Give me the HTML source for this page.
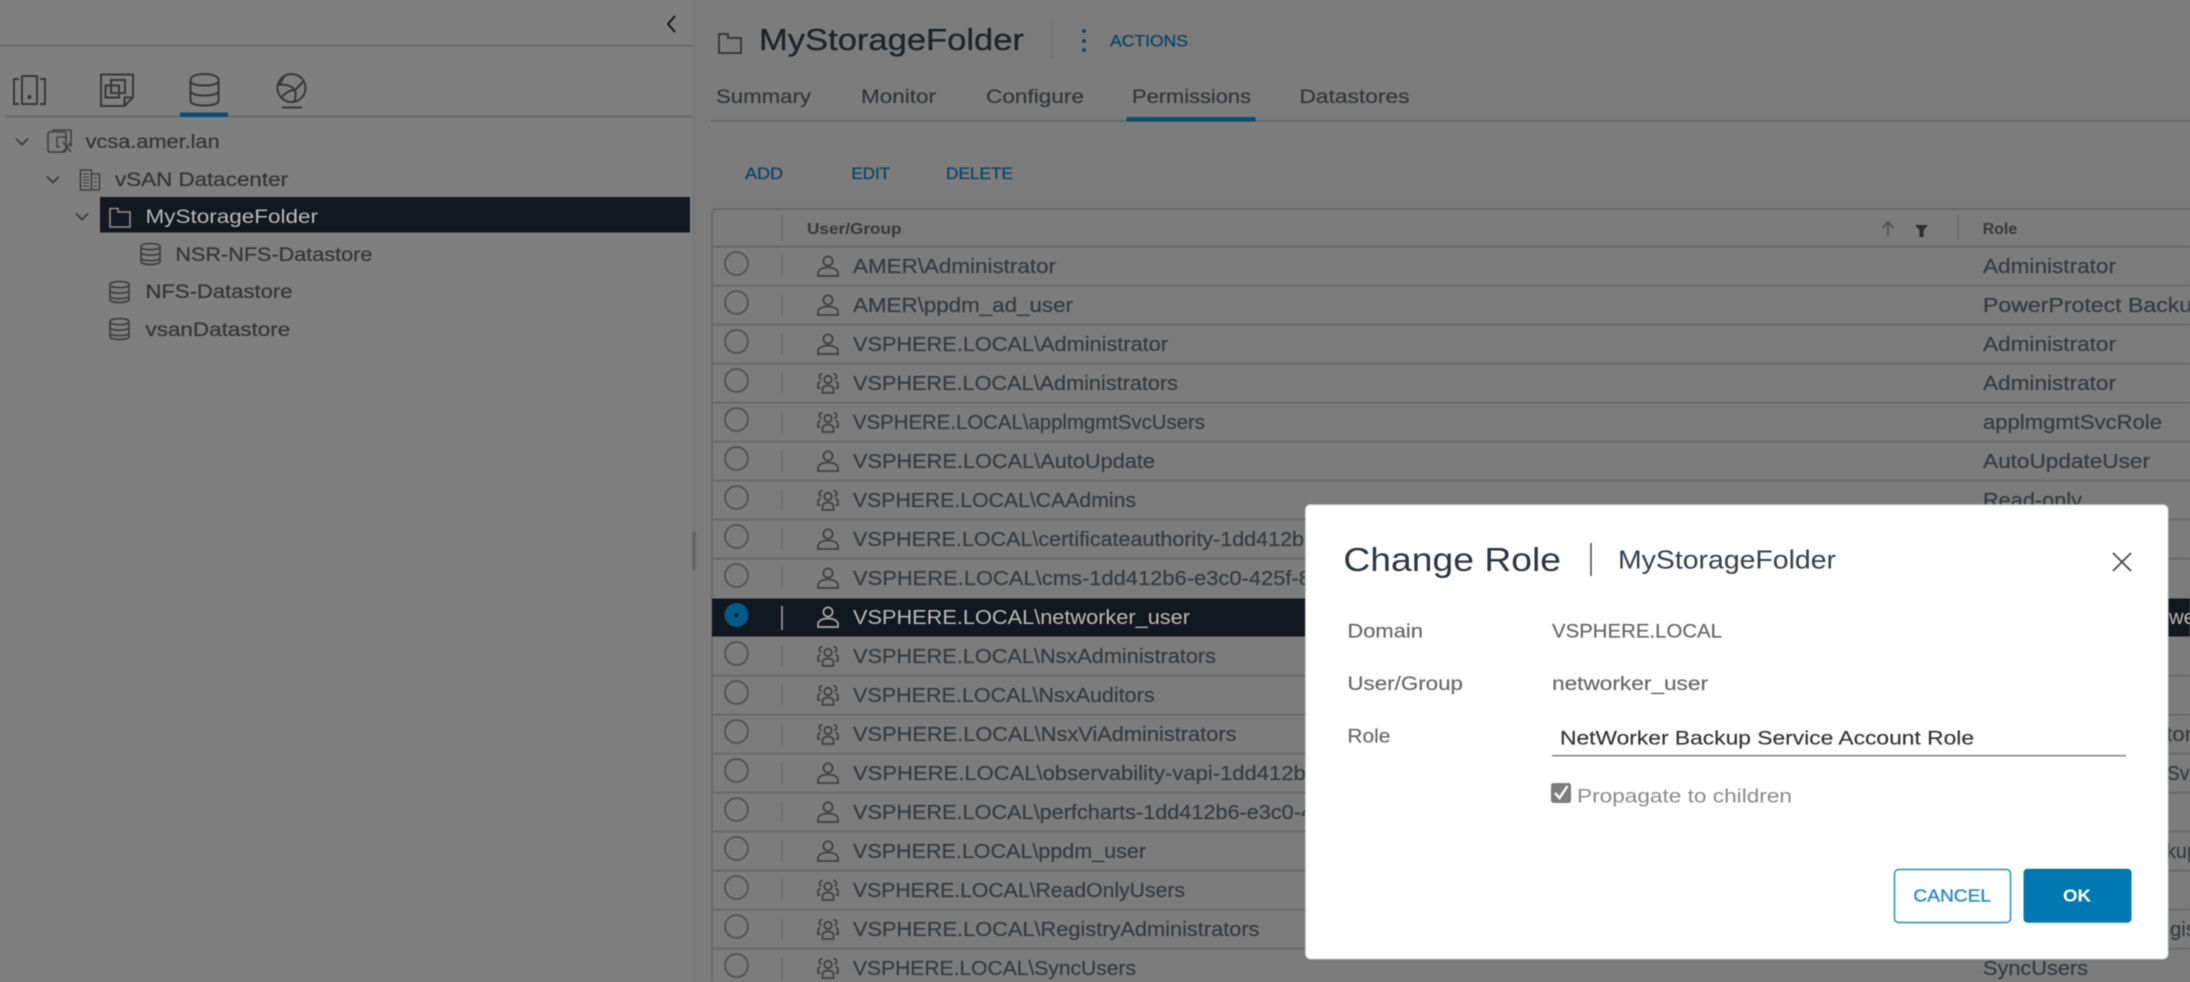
<!DOCTYPE html>
<html lang="en"><head><meta charset="utf-8"><title>Change Role</title>
<style>
html,body{margin:0;padding:0;background:#7d7d7d;width:2190px;height:982px;overflow:hidden}
svg{display:block;filter:blur(.55px)}
text{font-family:"Liberation Sans",sans-serif;white-space:pre}
.t{font-size:19px;fill:#363636;stroke:#363636;stroke-width:.25}
.r{font-size:20px;fill:#383c40;stroke:#383c40;stroke-width:.25}
.b{font-size:16.5px;fill:#0f4766;stroke:#0f4766;stroke-width:.35}
.tab{font-size:19.5px;fill:#35383b;stroke:#35383b;stroke-width:.25}
.l{font-size:19.5px;fill:#666;stroke:#666;stroke-width:.15}
.ic{fill:none;stroke:#414141;stroke-width:1.8}
.ln{stroke:#676767;stroke-width:1.7}
.sp{stroke:#6c6c6c;stroke-width:1.4}
.ra{fill:none;stroke:#525252;stroke-width:1.8}
</style></head><body>
<svg xmlns="http://www.w3.org/2000/svg" width="2190" height="982" viewBox="0 0 2190 982">
<defs>
<symbol id="p" width="22" height="22" viewBox="0 0 22 22"><g class="ic"><circle cx="11" cy="6" r="4.6"/><path d="M1 21v-3c0-3 4-5.500 10-5.500s10 2.500 10 5.500v3z"/></g></symbol>
<symbol id="g" width="22" height="22" viewBox="0 0 22 22"><g class="ic"><circle cx="11" cy="7.500" r="3.700"/><path d="M5.500 21v-4c0-2 2.500-3.500 5.500-3.500s5.500 1.500 5.500 3.500v4z"/><path d="M5.500 1.800a2.800 2.800 0 0 0 -1 5.500M16.500 1.800a2.800 2.800 0 0 1 1 5.500M3.500 9.500c-2 .5-2.500 2-2.500 3.500v3h2.500M18.500 9.500c2 .5 2.500 2 2.500 3.500v3h-2.500"/></g></symbol>
<symbol id="d" width="21" height="24" viewBox="0 0 21 24"><g class="ic"><path d="M1 4.500C1 .5 20 .5 20 4.500v15c0 4-19 4-19 0z"/><path d="M1 5c0 3.500 19 3.500 19 0M1 10.500c0 3.500 19 3.500 19 0M1 16c0 3.500 19 3.500 19 0"/></g></symbol>
<symbol id="c" width="14" height="9" viewBox="0 0 14 9"><path fill="none" stroke="#3e3e3e" stroke-width="1.900" d="M1 1.500l6 6 6-6"/></symbol>
</defs>

<!-- backgrounds -->
<rect width="2190" height="982" fill="#7c7c7c"/>
<rect x="0" y="0" width="692" height="982" fill="#7f7f7f"/>
<rect x="692" y="0" width="4" height="982" fill="#797979"/>
<rect x="692" y="532" width="4" height="38" fill="#656565"/>

<!-- sidebar header -->
<path d="M675 16l-7 8 7 8" fill="none" stroke="#1f1f1f" stroke-width="2.200"/>
<path class="ln" d="M0 45.700H692"/>
<path class="ln" d="M5 116.500H692"/>
<rect x="180" y="112.500" width="48" height="4.500" fill="#0a4e73"/>

<!-- top icons -->
<g fill="none" stroke="#383838" stroke-width="2">
<path d="M19 79h-5v25h5M40 79h5v25h-5"/><rect x="22" y="76" width="15" height="28" rx="1"/><circle cx="29.500" cy="97" r="1" fill="#383838"/>
<path d="M101 74.500h32v23l-8.500 8.500h-23.500zM133 97.500h-8.500v8.500"/><rect x="105.500" y="85.500" width="13.500" height="12"/><rect x="111" y="80" width="14" height="13"/>
<path d="M190.500 80C190.500 72 218.500 72 218.500 80v21c0 6-28 6-28 0z"/><path d="M190.500 81c0 6 28 6 28 0M190.500 91c0 6 28 6 28 0"/>
<circle cx="291.500" cy="88" r="14"/><path d="M278 85c6-1 13 0 17 5M295 90l8-8M295 90c-5 0-10 3-14 8M295 90c1 3 1 8-1 12M285 75.500c-2 3-4 6-5 9M282 107.500h20"/>
</g>

<!-- tree -->
<use href="#c" x="15" y="137"/>
<use href="#c" x="46" y="175"/>
<use href="#c" x="75" y="212"/>
<g fill="none" stroke="#414141" stroke-width="1.600">
<rect x="48" y="132" width="18" height="20" rx="2"/><path d="M53 132v-2h18v17M57 137h9M57 137v10h3M63 142l8 10M71 142l-8 10"/>
<path d="M80.500 190v-20h11v20zM91.500 174h8v16h-8"/><path stroke-width="1" d="M83 174h6M83 177h6M83 180h6M83 183h6M83 186h6M94 178h3M94 182h3M94 186h3"/>
</g>
<rect x="100" y="197" width="590" height="35.500" fill="#12181f"/>
<path d="M110 208.500V227h20V212h-12v-3.500h-8z" fill="none" stroke="#8e8e8e" stroke-width="1.600"/>
<use href="#d" x="140" y="242"/>
<use href="#d" x="109" y="280"/>
<use href="#d" x="109" y="317"/>
<text class="t" x="85.700" y="148" textLength="134" lengthAdjust="spacingAndGlyphs">vcsa.amer.lan</text>
<text class="t" x="115" y="186" textLength="173" lengthAdjust="spacingAndGlyphs">vSAN Datacenter</text>
<text class="t" x="145.500" y="223" textLength="172.500" lengthAdjust="spacingAndGlyphs" style="fill:#b8b8b8;stroke:none">MyStorageFolder</text>
<text class="t" x="175.400" y="261" textLength="197" lengthAdjust="spacingAndGlyphs">NSR-NFS-Datastore</text>
<text class="t" x="145.500" y="298" textLength="147" lengthAdjust="spacingAndGlyphs">NFS-Datastore</text>
<text class="t" x="145.500" y="336" textLength="144.700" lengthAdjust="spacingAndGlyphs">vsanDatastore</text>

<!-- main header -->
<path d="M719 34V53h22V38H728v-4z" fill="none" stroke="#383838" stroke-width="1.900"/>
<text x="759" y="50" font-size="31" fill="#1e2429" stroke="#1e2429" stroke-width=".3" textLength="265" lengthAdjust="spacingAndGlyphs">MyStorageFolder</text>
<path class="sp" d="M1052 22V59"/>
<g fill="#0f4766"><circle cx="1084" cy="31" r="2"/><circle cx="1084" cy="41" r="2"/><circle cx="1084" cy="50" r="2"/></g>
<text class="b" x="1110" y="46.700" textLength="78" lengthAdjust="spacingAndGlyphs">ACTIONS</text>
<text class="tab" x="716" y="103" textLength="95" lengthAdjust="spacingAndGlyphs">Summary</text>
<text class="tab" x="861" y="103" textLength="75" lengthAdjust="spacingAndGlyphs">Monitor</text>
<text class="tab" x="986" y="103" textLength="98" lengthAdjust="spacingAndGlyphs">Configure</text>
<text class="tab" x="1132" y="103" textLength="119" lengthAdjust="spacingAndGlyphs">Permissions</text>
<text class="tab" x="1299.500" y="103" textLength="110" lengthAdjust="spacingAndGlyphs">Datastores</text>
<path class="ln" d="M711 121H2190"/>
<rect x="1126.500" y="117" width="129" height="4.500" fill="#0a4e73"/>
<text class="b" x="745" y="179" textLength="38" lengthAdjust="spacingAndGlyphs">ADD</text>
<text class="b" x="851.500" y="179" textLength="38.500" lengthAdjust="spacingAndGlyphs">EDIT</text>
<text class="b" x="946" y="179" textLength="67" lengthAdjust="spacingAndGlyphs">DELETE</text>

<!-- table -->
<path d="M712 982V213q0-4 4-4H2190" fill="none" stroke="#676767" stroke-width="1.500"/>
<text x="807" y="234" font-size="16" font-weight="bold" fill="#3a3a3a" textLength="94.500" lengthAdjust="spacingAndGlyphs">User/Group</text>
<text x="1982.700" y="234" font-size="16" font-weight="bold" fill="#3a3a3a" textLength="34.500" lengthAdjust="spacingAndGlyphs">Role</text>
<path class="sp" d="M782 215V241M1958 215V240"/>
<path d="M1882.500 228l5.500-6 5.500 6M1888 222v14" fill="none" stroke="#505050" stroke-width="1.700"/>
<path d="M1915 225h13l-4.500 5.500v6.500h-4v-6.500z" fill="#2e2e2e"/>
<g class="ln">
<path d="M712 246.700H2190M712 285.700H2190M712 324.700H2190M712 363.700H2190M712 402.700H2190M712 441.700H2190M712 480.700H2190M712 519.700H2190M712 558.700H2190M712 675.700H2190M712 714.700H2190M712 753.700H2190M712 792.700H2190M712 831.700H2190M712 870.700H2190M712 909.700H2190M712 948.700H2190"/>
</g>
<g class="sp"><path d="M782 255v22M782 294v22M782 333v22M782 372v22M782 411v22M782 450v22M782 489v22M782 528v22M782 567v22M782 645v22M782 684v22M782 723v22M782 762v22M782 801v22M782 840v22M782 879v22M782 918v22M782 957v22"/></g>
<g class="ra" transform="translate(0,-2.500)">
<circle cx="736.500" cy="266" r="11.500"/><circle cx="736.500" cy="305" r="11.500"/><circle cx="736.500" cy="344" r="11.500"/><circle cx="736.500" cy="383" r="11.500"/><circle cx="736.500" cy="422" r="11.500"/><circle cx="736.500" cy="461" r="11.500"/><circle cx="736.500" cy="500" r="11.500"/><circle cx="736.500" cy="539" r="11.500"/><circle cx="736.500" cy="578" r="11.500"/><circle cx="736.500" cy="656" r="11.500"/><circle cx="736.500" cy="695" r="11.500"/><circle cx="736.500" cy="734" r="11.500"/><circle cx="736.500" cy="773" r="11.500"/><circle cx="736.500" cy="812" r="11.500"/><circle cx="736.500" cy="851" r="11.500"/><circle cx="736.500" cy="890" r="11.500"/><circle cx="736.500" cy="929" r="11.500"/><circle cx="736.500" cy="968" r="11.500"/>
</g>
<use href="#p" x="817" y="255"/><use href="#p" x="817" y="294"/><use href="#p" x="817" y="333"/>
<use href="#g" x="817" y="372"/><use href="#g" x="817" y="411"/>
<use href="#p" x="817" y="450"/>
<use href="#g" x="817" y="489"/>
<use href="#p" x="817" y="528"/><use href="#p" x="817" y="567"/>
<use href="#g" x="817" y="645"/><use href="#g" x="817" y="684"/><use href="#g" x="817" y="723"/>
<use href="#p" x="817" y="762"/><use href="#p" x="817" y="801"/><use href="#p" x="817" y="840"/>
<use href="#g" x="817" y="879"/><use href="#g" x="817" y="918"/><use href="#g" x="817" y="957"/>

<!-- user text -->
<text class="r" x="853" y="273" textLength="203" lengthAdjust="spacingAndGlyphs">AMER\Administrator</text>
<text class="r" x="853" y="312" textLength="220" lengthAdjust="spacingAndGlyphs">AMER\ppdm_ad_user</text>
<text class="r" x="853" y="351" textLength="315" lengthAdjust="spacingAndGlyphs">VSPHERE.LOCAL\Administrator</text>
<text class="r" x="853" y="390" textLength="325" lengthAdjust="spacingAndGlyphs">VSPHERE.LOCAL\Administrators</text>
<text class="r" x="853" y="429" textLength="352" lengthAdjust="spacingAndGlyphs">VSPHERE.LOCAL\applmgmtSvcUsers</text>
<text class="r" x="853" y="468" textLength="302" lengthAdjust="spacingAndGlyphs">VSPHERE.LOCAL\AutoUpdate</text>
<text class="r" x="853" y="507" textLength="283" lengthAdjust="spacingAndGlyphs">VSPHERE.LOCAL\CAAdmins</text>
<text class="r" x="853" y="546" textLength="463" lengthAdjust="spacingAndGlyphs">VSPHERE.LOCAL\certificateauthority-1dd412b6</text>
<text class="r" x="853" y="585" textLength="458" lengthAdjust="spacingAndGlyphs">VSPHERE.LOCAL\cms-1dd412b6-e3c0-425f-8</text>
<rect x="712" y="598.500" width="1478" height="38" fill="#12181f"/>
<circle cx="736.500" cy="615" r="12" fill="#03598a"/><circle cx="736.500" cy="615" r="2" fill="#12181f"/>
<path d="M782 606v24" stroke="#a4a4a4" stroke-width="1.500"/>
<g fill="none" stroke="#a8a8a8" stroke-width="1.700"><circle cx="828" cy="612" r="4.600"/><path d="M818 627v-3c0-3 4-5.500 10-5.500s10 2.500 10 5.500v3z"/></g>
<text class="r" x="853" y="624" textLength="337" lengthAdjust="spacingAndGlyphs" style="fill:#b9b9b9;stroke:none">VSPHERE.LOCAL\networker_user</text>
<text class="r" x="853" y="663" textLength="363" lengthAdjust="spacingAndGlyphs">VSPHERE.LOCAL\NsxAdministrators</text>
<text class="r" x="853" y="702" textLength="301.600" lengthAdjust="spacingAndGlyphs">VSPHERE.LOCAL\NsxAuditors</text>
<text class="r" x="853" y="741" textLength="383.500" lengthAdjust="spacingAndGlyphs">VSPHERE.LOCAL\NsxViAdministrators</text>
<text class="r" x="853" y="780" textLength="465" lengthAdjust="spacingAndGlyphs">VSPHERE.LOCAL\observability-vapi-1dd412b6</text>
<text class="r" x="853" y="819" textLength="460" lengthAdjust="spacingAndGlyphs">VSPHERE.LOCAL\perfcharts-1dd412b6-e3c0-4</text>
<text class="r" x="853" y="858" textLength="293" lengthAdjust="spacingAndGlyphs">VSPHERE.LOCAL\ppdm_user</text>
<text class="r" x="853" y="897" textLength="332" lengthAdjust="spacingAndGlyphs">VSPHERE.LOCAL\ReadOnlyUsers</text>
<text class="r" x="853" y="936" textLength="406.500" lengthAdjust="spacingAndGlyphs">VSPHERE.LOCAL\RegistryAdministrators</text>
<text class="r" x="853" y="975" textLength="283" lengthAdjust="spacingAndGlyphs">VSPHERE.LOCAL\SyncUsers</text>

<!-- role text -->
<text class="r" x="1983" y="273" textLength="133" lengthAdjust="spacingAndGlyphs">Administrator</text>
<text class="r" x="1983" y="312" textLength="222" lengthAdjust="spacingAndGlyphs">PowerProtect Backup</text>
<text class="r" x="1983" y="351" textLength="133" lengthAdjust="spacingAndGlyphs">Administrator</text>
<text class="r" x="1983" y="390" textLength="133" lengthAdjust="spacingAndGlyphs">Administrator</text>
<text class="r" x="1983" y="429" textLength="179" lengthAdjust="spacingAndGlyphs">applmgmtSvcRole</text>
<text class="r" x="1983" y="468" textLength="167" lengthAdjust="spacingAndGlyphs">AutoUpdateUser</text>
<text class="r" x="1983" y="507" textLength="99" lengthAdjust="spacingAndGlyphs">Read-only</text>
<text class="r" x="2169" y="624" style="fill:#b9b9b9;stroke:none" textLength="26" lengthAdjust="spacingAndGlyphs">we</text>
<text class="r" x="2166" y="741" textLength="26" lengthAdjust="spacingAndGlyphs">tor</text>
<text class="r" x="2167" y="780" textLength="32" lengthAdjust="spacingAndGlyphs">Svc</text>
<text class="r" x="2166" y="858" textLength="32" lengthAdjust="spacingAndGlyphs">kup</text>
<text class="r" x="2170" y="936" textLength="26" lengthAdjust="spacingAndGlyphs">gis</text>
<text class="r" x="1983" y="975" textLength="105" lengthAdjust="spacingAndGlyphs">SyncUsers</text>

<!-- modal -->
<rect x="1305.500" y="504.700" width="862.500" height="454.300" rx="5" fill="#fff" stroke="#c8d0d4" stroke-width="1"/>
<text x="1343.400" y="571" font-size="33" fill="#2c3640" textLength="217.600" lengthAdjust="spacingAndGlyphs">Change Role</text>
<path d="M1591 543V576" stroke="#444" stroke-width="1.500"/>
<text x="1618" y="568.300" font-size="26" fill="#36414c" textLength="218" lengthAdjust="spacingAndGlyphs">MyStorageFolder</text>
<path d="M2113 553l18 18M2131 553l-18 18" stroke="#4a4a4a" stroke-width="1.800" fill="none"/>
<text class="l" x="1347.400" y="637.700" textLength="75.600" lengthAdjust="spacingAndGlyphs">Domain</text>
<text class="l" x="1552" y="637.700" textLength="170" lengthAdjust="spacingAndGlyphs">VSPHERE.LOCAL</text>
<text class="l" x="1347.400" y="690" textLength="115.600" lengthAdjust="spacingAndGlyphs">User/Group</text>
<text class="l" x="1552" y="690" textLength="156" lengthAdjust="spacingAndGlyphs">networker_user</text>
<text class="l" x="1347.400" y="742.700" textLength="43" lengthAdjust="spacingAndGlyphs">Role</text>
<text x="1560" y="744.300" font-size="19.500" fill="#333" stroke="#333" stroke-width=".15" textLength="414" lengthAdjust="spacingAndGlyphs">NetWorker Backup Service Account Role</text>
<path d="M1552 755.700H2126" stroke="#8a8a8a" stroke-width="1.600"/>
<rect x="1551" y="783" width="20" height="20" rx="2.500" fill="#7d7d7d"/>
<path d="M1555 793l4.500 5 8-12" fill="none" stroke="#fff" stroke-width="2.400"/>
<text x="1577" y="802.700" font-size="19.500" fill="#8a8a8a" textLength="215" lengthAdjust="spacingAndGlyphs">Propagate to children</text>
<rect x="1894.500" y="869.500" width="116" height="53" rx="4" fill="#fff" stroke="#3f9cc6" stroke-width="1.700"/>
<text x="1913.400" y="901.700" font-size="17.500" fill="#2b8fbd" stroke="#2b8fbd" stroke-width=".4" textLength="77.600" lengthAdjust="spacingAndGlyphs">CANCEL</text>
<rect x="2023.500" y="868.700" width="108" height="54" rx="4" fill="#0079b2"/>
<text x="2063" y="901.700" font-size="17.500" font-weight="bold" fill="#fff" textLength="28" lengthAdjust="spacingAndGlyphs">OK</text>
</svg>
</body></html>
